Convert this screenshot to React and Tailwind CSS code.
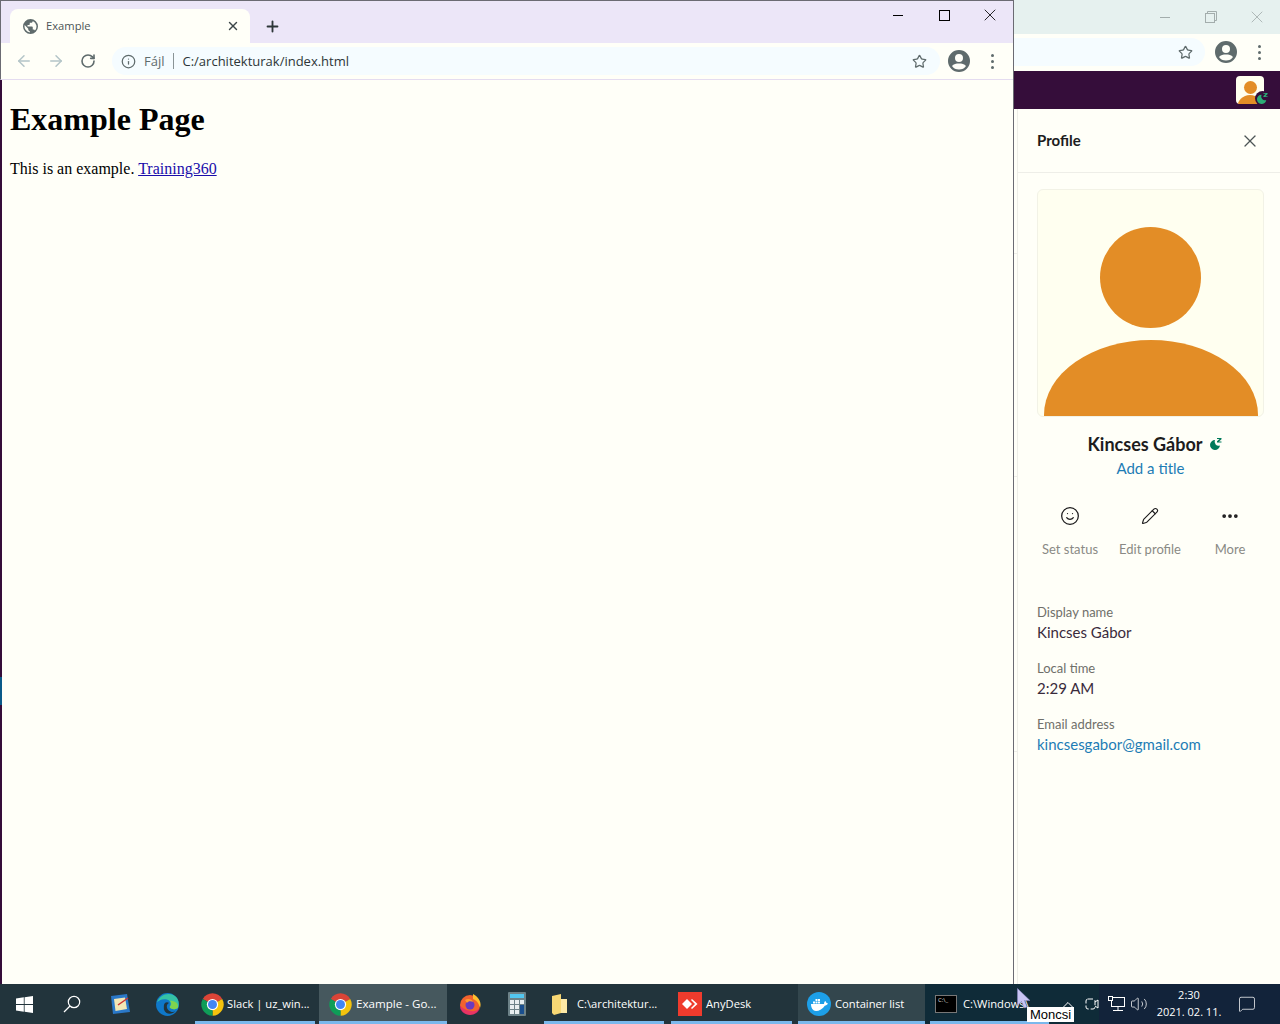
import React from 'react';
import { ArrowLeft, ArrowRight, RotateCw, Info, Star, X, Plus, Smile, Pencil, Ellipsis, ChevronUp, Volume2, MessageSquare } from 'lucide-react';

function ChromeIcon({ size = 27 }) {
  return (
    <svg width={size} height={size} viewBox="0 0 48 48">
      <path d="M24 24 L6.7 14 A20 20 0 0 1 41.3 14 Z" fill="#db4437" />
      <path d="M24 24 L41.3 14 A20 20 0 0 1 24 44 Z" fill="#f4c20d" />
      <path d="M24 24 L24 44 A20 20 0 0 1 6.7 14 Z" fill="#0f9d58" />
      <circle cx="24" cy="24" r="10" fill="#fff" />
      <circle cx="24" cy="24" r="8" fill="#4285f4" />
    </svg>
  );
}

function EdgeIcon() {
  return (
    <svg width="25" height="25" viewBox="0 0 48 48">
      <circle cx="24" cy="24" r="22" fill="#0f78c9" />
      <path d="M4 20 C8 6 24 0 36 6 C46 11 47 24 44 30 C40 34 30 34 28 29 C32 24 30 15 21 14 C13 13 7 16 4 20 Z" fill="#35c1a5" />
      <path d="M44 30 C40 34 30 34 28 29 C32 26 32 20 29 17 C38 17 46 22 44 30 Z" fill="#7fd44d" />
      <path d="M17 27 C17 21 22 18 27 21 C22 23 21 30 26 35 C30 39 36 39 39 37 C33 44 20 44 17 33 Z" fill="#22343c" />
    </svg>
  );
}

function FirefoxIcon() {
  return (
    <svg width="24" height="24" viewBox="0 0 48 48">
      <circle cx="24" cy="26" r="20" fill="#f2622e" />
      <path d="M30 4 C42 10 48 22 44 32 C42 22 36 16 30 14 Z" fill="#ffbd2e" />
      <path d="M4 28 C3 38 14 46 24 46 C34 46 42 40 44 32 C38 40 20 42 4 28 Z" fill="#e31587" opacity="0.6" />
      <circle cx="24" cy="26" r="9" fill="#6a3bc0" />
      <path d="M14 16 C20 12 28 14 30 20 C26 18 20 18 18 22 Z" fill="#ff9a2e" />
    </svg>
  );
}

function CalcIcon() {
  return (
    <svg width="18" height="24" viewBox="0 0 18 24">
      <rect width="18" height="24" rx="1" fill="#6d8288" />
      <rect x="2" y="2" width="14" height="4" fill="#52c7f0" />
      <g fill="#e8eef0">
        <rect x="2" y="8" width="4" height="4" />
        <rect x="7" y="8" width="4" height="4" />
        <rect x="2" y="13" width="4" height="4" />
        <rect x="7" y="13" width="4" height="4" />
        <rect x="2" y="18" width="4" height="4" />
        <rect x="7" y="18" width="4" height="4" />
      </g>
      <rect x="12" y="8" width="4" height="4" fill="#e8eef0" />
      <rect x="12" y="13" width="4" height="9" fill="#1a4f8f" />
    </svg>
  );
}

function TaskItem({ icon, label, active, width, iconBox = 'w-8', labelGap = 'ml-[3px]', textSize = 'text-[11.2px]' }) {
  return (
    <div className={`flex h-full items-center border-b-[3px] border-[#7ab8ec] pl-[1px] pt-[3px] ${width} ${active || ''}`}>
      <div className={`flex shrink-0 justify-center ${iconBox}`}>{icon}</div>
      <span className={`whitespace-nowrap text-white ${textSize} ${labelGap}`}>{label}</span>
    </div>
  );
}

function Taskbar() {
  return (
    <div className="flex h-10 shrink-0 items-center bg-[#22343c] font-['Open_Sans',sans-serif]">
      <div className="flex w-12 justify-center">
        <svg width="17" height="17" viewBox="0 0 17 17" fill="#fff">
          <path d="M0 2.4 7.8 1.3V8H0Z M8.600 1.2 17 0V8H8.600Z M0 9H7.800V15.700L0 14.600Z M8.600 9H17V17L8.600 15.800Z" />
        </svg>
      </div>
      <div className="flex w-12 justify-center">
        <svg width="18" height="18" viewBox="0 0 18 18" fill="none" stroke="#fff" strokeWidth="1.2">
          <circle cx="11" cy="7" r="5.7" />
          <path d="M7 11 1 17" />
        </svg>
      </div>
      <div className="flex w-12 justify-center">
        <svg width="24" height="24" viewBox="0 0 24 24">
          <path d="M3 4 19 2 22 20 5 22Z" fill="#2a78c8" />
          <path d="M6 7 17 5.5 19 17 7.5 19Z" fill="#f3e7b5" />
          <path d="M10 13 20 6" stroke="#c33" strokeWidth="1.5" />
        </svg>
      </div>
      <div className="flex w-[47px] justify-center"><EdgeIcon /></div>
      <div className="w-[4px]" />
      <TaskItem icon={<ChromeIcon />} label="Slack | uz_win..." width="w-[120px]" labelGap="-ml-[1px]" />
      <div className="w-[4px]" />
      <TaskItem icon={<ChromeIcon />} label="Example - Go..." width="w-[128px]" active="bg-[#46585e]" iconBox="w-10" labelGap="-ml-[4px]" textSize="text-[11.6px]" />
      <div className="flex w-[46px] justify-center"><FirefoxIcon /></div>
      <div className="flex w-[47px] justify-center"><CalcIcon /></div>
      <div className="w-[4px]" />
      <TaskItem
        icon={
          <svg width="15" height="21" viewBox="0 0 15 21">
            <path d="M0 2 9 0V19L2 21 0 19Z" fill="#f7d774" />
            <path d="M9 5H15V19H9Z" fill="#fde9a6" />
          </svg>
        }
        label="C:\architektur..."
        width="w-[120px]"
        iconBox="w-7"
        labelGap="ml-[4px]"
      />
      <div className="w-[7px]" />
      <TaskItem
        icon={
          <div className="flex h-6 w-6 items-center justify-center bg-[#ef3b2d]">
            <svg width="16" height="12" viewBox="0 0 16 12">
              <path d="M5 1 10 6 5 11 0 6Z" fill="#fff" />
              <path d="M10 1 15.5 6 10 11 9 10 13 6 9 2Z" fill="#fff" />
            </svg>
          </div>
        }
        label="AnyDesk"
        width="w-[121px]"
        iconBox="w-9"
        labelGap="-ml-[2px]"
      />
      <div className="w-[6px]" />
      <TaskItem
        icon={
          <div className="flex h-6 w-6 items-center justify-center rounded-full bg-[#1d9fe8]">
            <svg width="18" height="13" viewBox="0 0 18 13" fill="#fff">
              <path d="M1 6H14C14 4 15 3 15.5 3 16 4 16 5 18 5.5 17 7 16 7.5 15 7.5 13 11 9 13 6 13 3 13 1 10 1 6Z" />
              <rect x="3" y="3.5" width="2" height="2" />
              <rect x="5.5" y="3.5" width="2" height="2" />
              <rect x="8" y="3.5" width="2" height="2" />
              <rect x="5.5" y="1" width="2" height="2" />
              <rect x="8" y="1" width="2" height="2" />
            </svg>
          </div>
        }
        label="Container list"
        width="w-[127px]"
        active="bg-[#33464d]"
        iconBox="w-10"
        labelGap="-ml-[4px]"
      />
      <div className="flex h-full items-center bg-[#0f2b38] pl-[5px]">
        <TaskItem
          icon={
            <div className="h-[18px] w-[22px] border border-[#777] bg-black pl-[2px] text-[6px] leading-[8px] text-[#ddd]">C:\_</div>
          }
          label="C:\Windows\"
          width="w-[119px] overflow-hidden"
          iconBox="w-[30px]"
          labelGap="ml-[2px]"
        />
        <div className="flex w-[50px] justify-start pl-[9px] pt-[2px]">
          <ChevronUp className="h-5 w-5 text-white" strokeWidth={1.2} />
        </div>
      </div>
      <div className="flex h-full flex-1 items-center bg-[#12233a] text-white">
        <svg width="14" height="18" viewBox="0 0 14 18" fill="none" stroke="#fff" strokeWidth="1" className="-ml-[14px]">
          <rect x="1" y="4" width="9" height="10" rx="2" strokeDasharray="5 2" />
          <path d="M10 7 13 5V13L10 11" />
        </svg>
        <svg width="17" height="16" viewBox="0 0 17 16" fill="none" stroke="#fff" strokeWidth="1" className="ml-[9px]">
          <rect x="3.5" y="1.5" width="13" height="9" />
          <rect x="0.5" y="0.5" width="4" height="4" fill="#12233a" />
          <path d="M10 11V14M5 14.5H15" />
        </svg>
        <Volume2 className="ml-[5px] h-[18px] w-[18px]" strokeWidth={1} />
        <div className="-ml-[1px] -mt-[2px] w-[84px] text-center text-[11px] leading-[17px]">
          <div>2:30</div>
          <div>2021. 02. 11.</div>
        </div>
        <MessageSquare className="ml-[7px] h-[18px] w-[18px]" strokeWidth={1} />
      </div>
    </div>
  );
}

function ChromeWindow() {
  return (
    <div className="flex w-[1014px] shrink-0 flex-col border-r border-t border-r-[#6b6b73] border-t-[#6b6b73] bg-[#fffff8]">
      <div className="flex h-[42px] shrink-0 items-end border-l border-l-[#6b6b73] bg-[#ece6f8] pl-[9px]">
        <div className="flex h-[34px] w-[240px] items-center rounded-t-lg bg-[#fffff8] pl-[13px] pr-[10px]">
          <svg width="15" height="15" viewBox="0 0 16 16" fill="#5f6b6c">
            <path d="M8 0a8 8 0 1 0 0 16A8 8 0 0 0 8 0Zm-.8 14.3A6.4 6.4 0 0 1 1.8 6.5L5.6 10.3v.8c0 .9.7 1.6 1.6 1.6v1.6Zm5.500-2a1.600 1.600 0 0 0-1.500-1.100h-.8V8.800c0-.4-.4-.8-.8-.8H4.800V6.400h1.600c.4 0 .8-.4.8-.8V4h1.600c.9 0 1.600-.7 1.600-1.600v-.3a6.400 6.400 0 0 1 2.300 10.200Z" />
          </svg>
          <span className="ml-[8px] flex-1 font-['Open_Sans',sans-serif] text-[11.2px] text-[#4d5556]">Example</span>
          <X className="h-[14px] w-[14px] text-[#3c4648]" strokeWidth={2.4} />
        </div>
        <div className="flex h-[34px] w-[44px] items-center justify-center">
          <Plus className="h-[17px] w-[17px] text-[#2d3638]" strokeWidth={2.6} />
        </div>
        <div className="ml-auto flex h-[34px] -translate-y-[11px] items-center text-black">
          <div className="flex w-[46px] justify-center"><div className="h-px w-[10px] bg-black" /></div>
          <div className="flex w-[46px] justify-center"><div className="h-[11px] w-[11px] border border-black" /></div>
          <div className="flex w-[46px] justify-center"><X className="h-[20px] w-[20px]" strokeWidth={1} absoluteStrokeWidth /></div>
        </div>
      </div>
      <div className="flex h-[37px] shrink-0 items-center border-b border-l border-b-[#e4dcf0] border-l-[#6b6b73] pl-[14px] font-['Open_Sans',sans-serif]">
        <ArrowLeft className="h-[18px] w-[18px] text-[#b4c5c8]" strokeWidth={2} />
        <ArrowRight className="ml-[14px] h-[18px] w-[18px] text-[#b4c5c8]" strokeWidth={2} />
        <RotateCw className="ml-[15px] h-[16px] w-[16px] text-[#5f6b6c]" strokeWidth={2.4} />
        <div className="ml-[16px] flex h-[28px] w-[828px] items-center rounded-full bg-[#f5fcff] pl-[9px] pr-[13px]">
          <Info className="h-[15px] w-[15px] text-[#5f6b6c]" strokeWidth={2} />
          <span className="ml-[8px] mt-[2px] text-[13px] text-[#5f6b6c]">Fájl</span>
          <div className="ml-[8px] h-[16px] w-px bg-[#8a9496]" />
          <span className="ml-[9px] mt-[2px] flex-1 text-[13px] text-[#2d3638]">C:/architekturak/index.html</span>
          <Star className="h-[15px] w-[15px] text-[#5f6b6c]" strokeWidth={2} />
        </div>
        <svg width="24" height="24" viewBox="0 0 24 24" fill="#5f6b6c" className="ml-[7px]">
          <path d="M12 1a11 11 0 1 0 0 22 11 11 0 0 0 0-22Zm0 4a4 4 0 1 1 0 8 4 4 0 0 1 0-8Zm0 15.5c-3 0-5.6-1.400-7-3.600 1.500-1.800 4.300-2.400 7-2.400s5.500.6 7 2.400c-1.400 2.200-4 3.600-7 3.600Z" />
        </svg>
        <div className="ml-[20px] flex flex-col gap-[3px]">
          <div className="h-[3px] w-[3px] rounded-full bg-[#5f6b6c]" />
          <div className="h-[3px] w-[3px] rounded-full bg-[#5f6b6c]" />
          <div className="h-[3px] w-[3px] rounded-full bg-[#5f6b6c]" />
        </div>
      </div>
      <div className="flex flex-1">
        <div className="flex w-[2px] shrink-0 flex-col bg-[#350d3a]">
          <div className="h-[597px]" />
          <div className="h-[28px] bg-[#0a5a8a]" />
        </div>
        <div className="flex-1 pl-[8px] pt-[21px] font-['Liberation_Serif',serif] text-black">
          <h1 className="text-[32px] font-bold leading-[37px]">Example Page</h1>
          <p className="mt-[22px] text-[16px] leading-[18px]">
            This is an example. <a className="text-[#1a0dab] underline" href="#training">Training360</a>
          </p>
        </div>
      </div>
    </div>
  );
}

function Field({ label, value, link }) {
  return (
    <div className="mb-[17px]">
      <div className="text-[13px] leading-[18px] text-[#6f6f6a]">{label}</div>
      <div className={`mt-[1px] text-[15px] leading-[20px] ${link ? 'text-[#1d7cb5]' : 'text-[#3a2b3c]'}`}>{value}</div>
    </div>
  );
}

function Action({ icon, label }) {
  return (
    <div className="flex w-20 flex-col items-center">
      <div className="flex h-[24px] items-center text-[#1d1c1d]">{icon}</div>
      <div className="mt-[11px] text-[13px] leading-[20px] text-[#8a8a85]">{label}</div>
    </div>
  );
}

function SnoozeBadge() {
  return (
    <svg width="14" height="14" viewBox="0 0 14 14" fill="#007a5a">
      <path d="M6 3A5 5 0 1 0 11 8.5 4 4 0 0 1 6 3Z" />
      <path d="M8 1H12.5V2.2L10 4.5H12.5V5.5H8V4.3L10.5 2H8Z" />
    </svg>
  );
}

function SlackWindow() {
  return (
    <div className="flex min-w-0 flex-1 flex-col bg-[#fffff8] font-['Lato',sans-serif]">
      <div className="flex h-[34px] shrink-0 items-center justify-end bg-[#e6f1ef] text-[#a3adac]">
        <div className="flex w-[46px] justify-center"><div className="h-px w-[10px] bg-[#a3adac]" /></div>
        <div className="flex w-[46px] justify-center">
          <svg width="12" height="12" viewBox="0 0 12 12" fill="none" stroke="currentColor">
            <rect x="0.5" y="2.5" width="9" height="9" />
            <path d="M2.5 2.5V.5H11.5V9.5H9.5" />
          </svg>
        </div>
        <div className="flex w-[46px] justify-center"><X className="h-[20px] w-[20px]" strokeWidth={1} absoluteStrokeWidth /></div>
      </div>
      <div className="flex h-[37px] shrink-0 items-center pb-[1px]">
        <div className="flex h-[28px] w-[191px] items-center justify-end rounded-r-full bg-[#f5fcff] pr-[12px]">
          <Star className="h-[15px] w-[15px] text-[#5f6b6c]" strokeWidth={2} />
        </div>
        <svg width="24" height="24" viewBox="0 0 24 24" fill="#5f6b6c" className="ml-[9px]">
          <path d="M12 1a11 11 0 1 0 0 22 11 11 0 0 0 0-22Zm0 4a4 4 0 1 1 0 8 4 4 0 0 1 0-8Zm0 15.5c-3 0-5.6-1.400-7-3.600 1.500-1.800 4.300-2.400 7-2.400s5.500.6 7 2.400c-1.400 2.200-4 3.600-7 3.600Z" />
        </svg>
        <div className="ml-[20px] flex flex-col gap-[3px]">
          <div className="h-[3px] w-[3px] rounded-full bg-[#5f6b6c]" />
          <div className="h-[3px] w-[3px] rounded-full bg-[#5f6b6c]" />
          <div className="h-[3px] w-[3px] rounded-full bg-[#5f6b6c]" />
        </div>
      </div>
      <div className="flex h-[38px] shrink-0 items-center justify-end bg-[#350d3a] pr-[16px]">
        <div className="h-7 w-7 overflow-hidden rounded-[4px] bg-[#fffff0]">
          <div className="mx-auto mt-[5px] h-[13px] w-[13px] rounded-full bg-[#e38d26]" />
          <div className="mx-auto mt-[1px] h-[20px] w-[26px] rounded-t-full bg-[#e38d26]" />
        </div>
        <div className="absolute right-[10px] top-[91px] flex h-[15px] w-[15px] items-center justify-center rounded-full bg-[#350d3a]">
          <svg width="13" height="13" viewBox="0 0 14 14" fill="#2bac76">
            <path d="M6 3A5 5 0 1 0 11 8.5 4 4 0 0 1 6 3Z" />
            <path d="M8 1H12.5V2.2L10 4.5H12.5V5.5H8V4.3L10.5 2H8Z" />
          </svg>
        </div>
      </div>
      <div className="flex flex-1">
        <div className="flex w-[4px] shrink-0 flex-col border-r border-[#eeeee8]">
          <div className="h-[145px] border-b border-[#eeeee8]" />
          <div className="h-[223px] border-b border-[#eeeee8]" />
          <div className="h-[275px] border-b border-[#eeeee8]" />
        </div>
        <div className="min-w-0 flex-1">
          <div className="flex h-[64px] items-center justify-between border-b border-[#eeeee8] pl-[19px] pr-[20px]">
            <span className="text-[15px] font-bold text-[#1d1c1d]">Profile</span>
            <X className="h-[20px] w-[20px] text-[#4d5556]" strokeWidth={1.5} />
          </div>
          <div className="px-[19px] pt-[16px]">
            <div className="flex h-[228px] w-[227px] flex-col items-center overflow-hidden rounded-[6px] border border-[#f2f2e6] bg-[#fffff0]">
              <div className="mt-[37px] h-[101px] w-[101px] shrink-0 rounded-full bg-[#e38d26]" />
              <div className="mt-[12px] h-[150px] w-[214px] shrink-0 rounded-t-[50%] bg-[#e38d26]" />
            </div>
            <div className="mt-[14px] flex w-[227px] items-center justify-center gap-[6px] pl-[9px]">
              <span className="text-[18px] font-bold leading-[26px] text-[#1d1c1d]">Kincses Gábor</span>
              <SnoozeBadge />
            </div>
            <div className="w-[227px] text-center text-[15px] leading-[22px] text-[#1d7cb5]">Add a title</div>
            <div className="-ml-[7px] mt-[25px] flex w-[240px]">
              <Action icon={<Smile className="h-[20px] w-[20px]" strokeWidth={1.5} />} label="Set status" />
              <Action icon={<Pencil className="h-[18px] w-[18px]" strokeWidth={1.5} />} label="Edit profile" />
              <Action icon={<Ellipsis className="h-[20px] w-[20px]" strokeWidth={2.5} />} label="More" />
            </div>
            <div className="mt-[44px]">
              <Field label="Display name" value="Kincses Gábor" />
              <Field label="Local time" value="2:29 AM" />
              <Field label="Email address" value="kincsesgabor@gmail.com" link />
            </div>
          </div>
        </div>
      </div>
    </div>
  );
}

function App() {
  return (
    <div className="relative flex h-[1024px] w-[1280px] flex-col overflow-hidden">
      <div className="flex min-h-0 flex-1">
        <ChromeWindow />
        <SlackWindow />
      </div>
      <Taskbar />
      {/* tooltip + pointer sit over the taskbar */}
      <div className="absolute left-[1027px] top-[1007px] h-[15px] w-[47px] bg-white text-center font-['Liberation_Sans',sans-serif] text-[13px] leading-[15px] text-black">Moncsi</div>
      <svg width="14" height="22" viewBox="0 0 14 22" className="absolute left-[1017px] top-[988px]">
        <path d="M0.5 0.5V17L4.5 13.5 7.5 20 10 19 7.5 12.5H13Z" fill="#c8c4f4" stroke="#8f8bc8" strokeWidth="0.5" />
      </svg>
    </div>
  );
}

export default App;
